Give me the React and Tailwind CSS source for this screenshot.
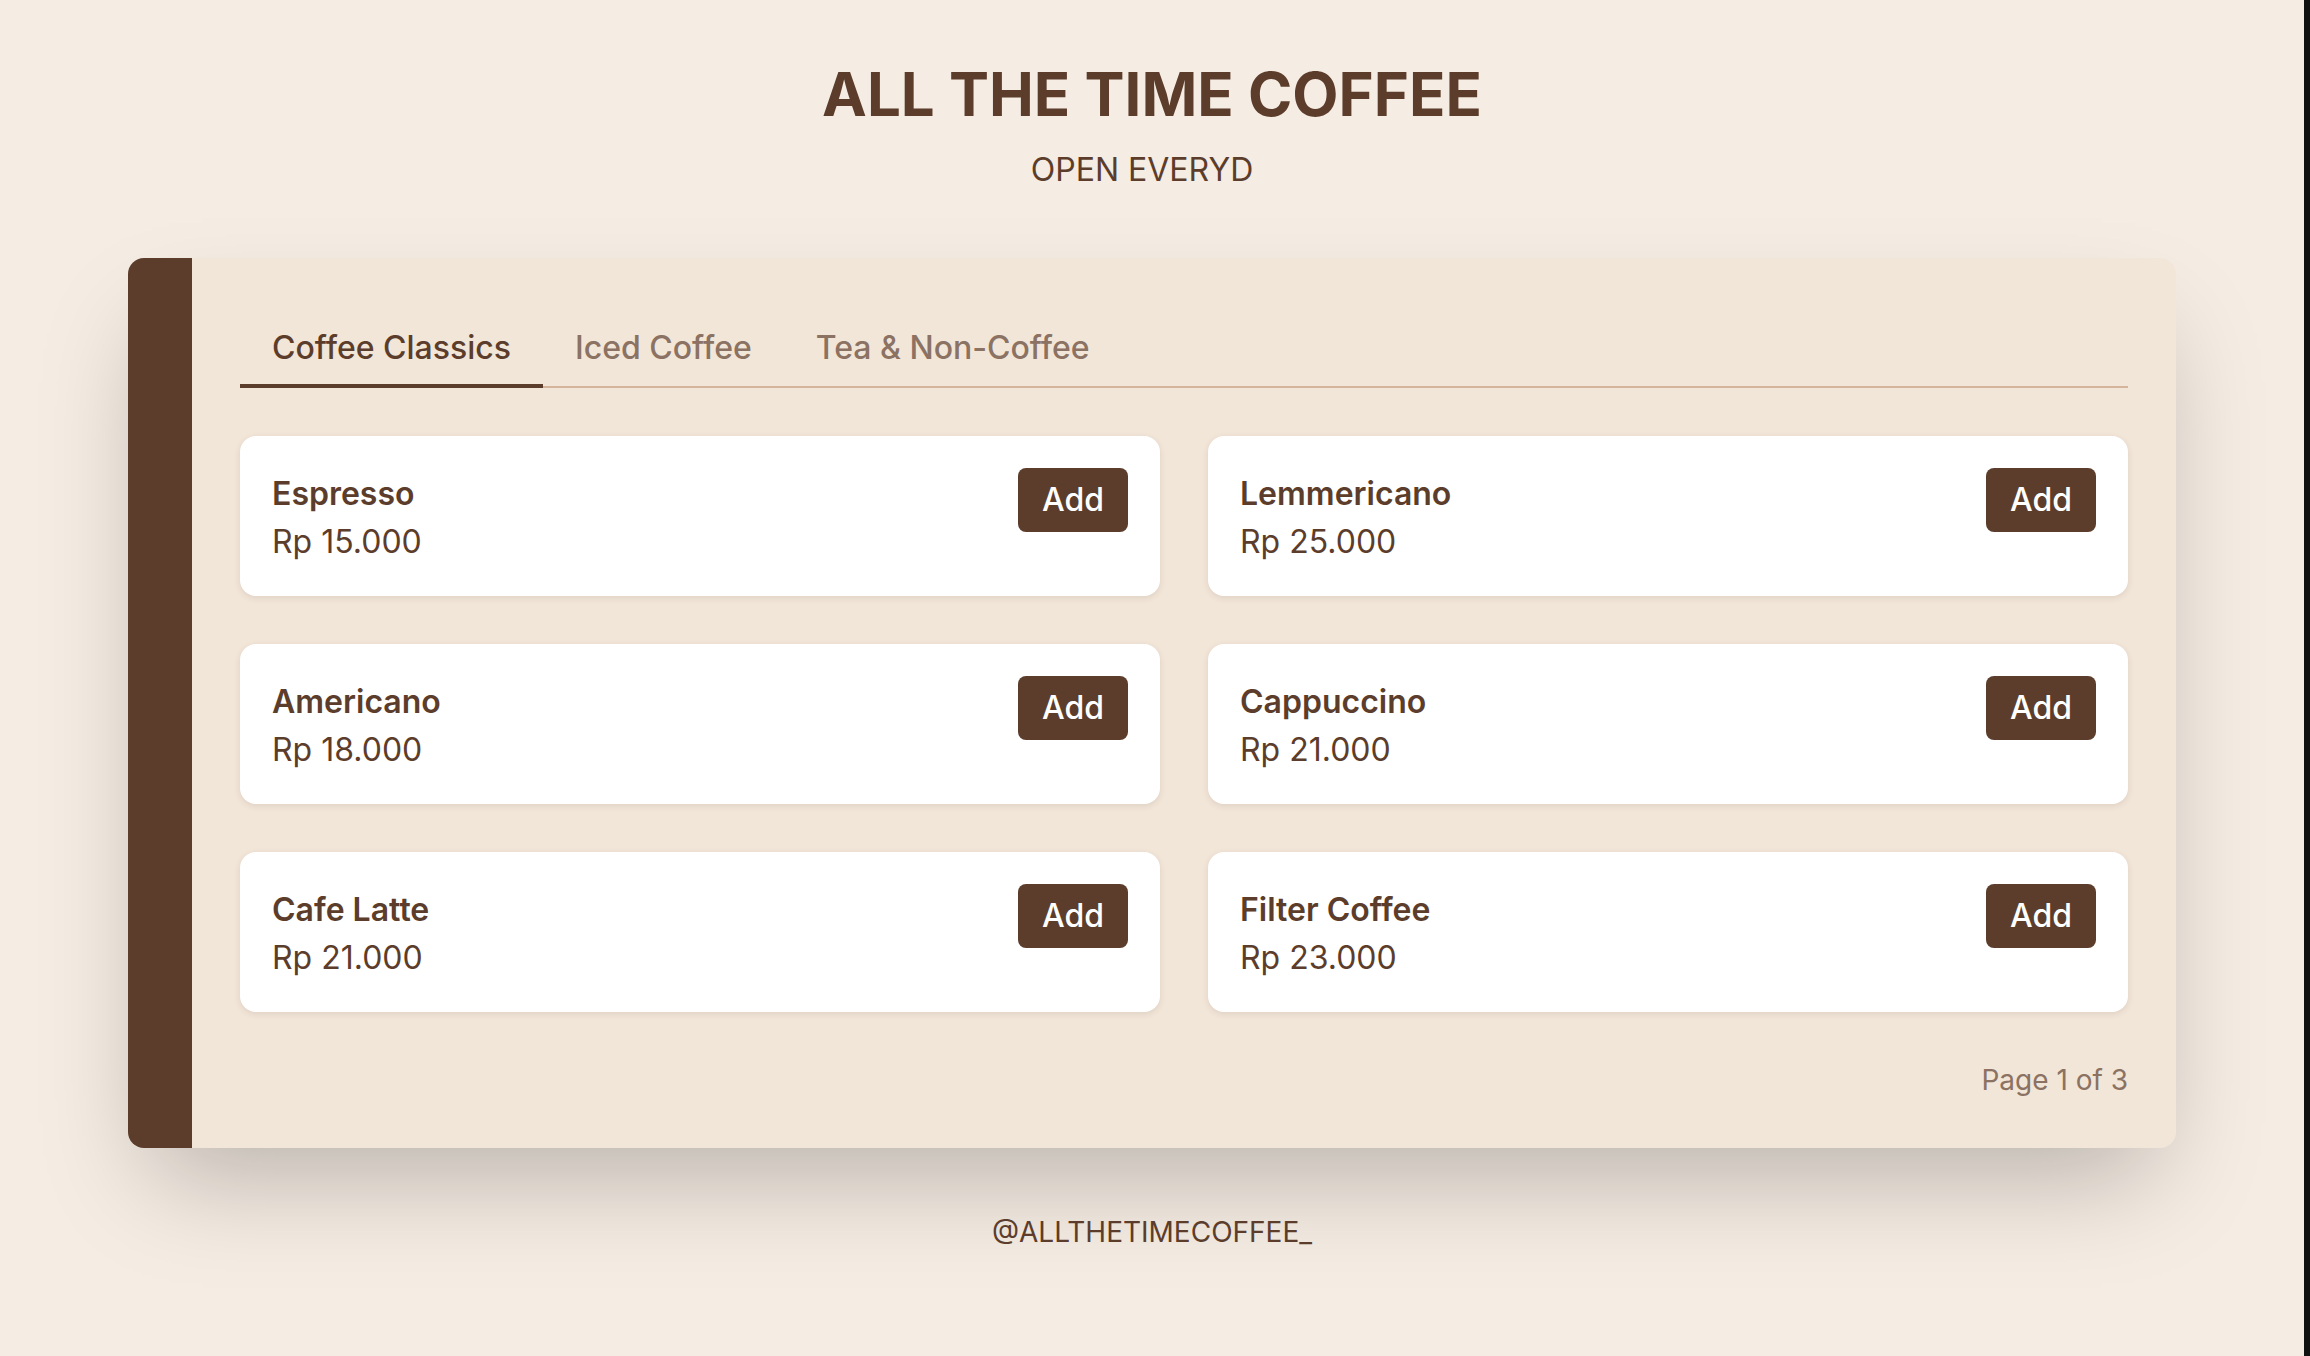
import { useState } from 'react';

const menu = [
  { name: 'Espresso', price: 'Rp 15.000' },
  { name: 'Lemmericano', price: 'Rp 25.000' },
  { name: 'Americano', price: 'Rp 18.000' },
  { name: 'Cappuccino', price: 'Rp 21.000' },
  { name: 'Cafe Latte', price: 'Rp 21.000' },
  { name: 'Filter Coffee', price: 'Rp 23.000' },
];

const tabs = ['Coffee Classics', 'Iced Coffee', 'Tea & Non-Coffee'];

const MenuCard = ({ name, price }) => (
  <div className="flex items-start justify-between bg-white rounded-2xl px-8 pt-[34px] pb-[30px] shadow-[0_2px_6px_rgba(92,61,43,0.12)]">
    <div>
      <p className="text-[32px] leading-[48px] font-semibold text-[#5c3d2b]">{name}</p>
      <p className="text-[32px] leading-[48px] text-[#5c3d2b]">{price}</p>
    </div>
    <button className="-mt-[2px] px-6 py-2 rounded-lg bg-[#5c3d2b] text-white text-[32px] leading-[48px] font-medium">
      Add
    </button>
  </div>
);

export default function App() {
  const [active, setActive] = useState(0);

  return (
    <div
      className="flex min-h-screen bg-[#f5ece3]"
      style={{ fontFamily: 'Inter, "Noto Sans", sans-serif' }}
    >
      <main className="flex-1 flex flex-col items-center pt-[58px] pb-10">
        {/* Header */}
        <h1 className="text-[60px] leading-[72px] font-bold text-[#5c3d2b]">
          ALL THE TIME COFFEE
        </h1>
        <p className="mt-4 pr-5 text-[32px] leading-[48px] text-[#5c3d2b]">OPEN EVERYD</p>

        {/* Menu panel */}
        <section className="mt-16 w-[2048px] flex rounded-2xl overflow-hidden bg-[#f2e6d9] shadow-[0_50px_100px_-24px_rgba(0,0,0,0.25)]">
          <div className="w-16 shrink-0 bg-[#5c3d2b]" />
          <div className="flex-1 p-12">
            <div className="flex border-b-2 border-[#d4b49a]">
              {tabs.map((t, i) => (
                <button
                  key={t}
                  onClick={() => setActive(i)}
                  className={
                    i === active
                      ? 'px-8 pt-[18px] pb-3 -mb-[2px] border-b-4 border-[#5c3d2b] text-[32px] leading-[48px] font-medium text-[#5c3d2b]'
                      : 'px-8 pt-[18px] pb-3 -mb-[2px] border-b-4 border-transparent text-[32px] leading-[48px] font-medium text-[#8b7262]'
                  }
                >
                  {t}
                </button>
              ))}
            </div>

            <div className="grid grid-cols-2 gap-12 mt-12">
              {menu.map((m) => (
                <MenuCard key={m.name} {...m} />
              ))}
            </div>

            <p className="mt-12 text-right text-[28px] leading-[40px] text-[#8b7262]">Page 1 of 3</p>
          </div>
        </section>

        <p className="mt-16 text-[28px] leading-[40px] text-[#5c3d2b]">@ALLTHETIMECOFFEE_</p>
      </main>
      <div className="w-[6px] shrink-0 bg-[#111111]" />
    </div>
  );
}
